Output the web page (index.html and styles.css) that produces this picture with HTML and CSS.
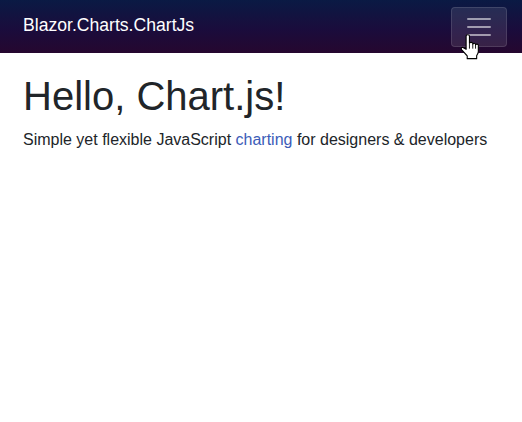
FILE: index.html
```html
<!DOCTYPE html>
<html lang="en">
<head>
<meta charset="utf-8">
<title>Blazor.Charts.ChartJs</title>
<link rel="stylesheet" href="styles.css">
</head>
<body>
<header class="top-row">
  <a class="brand" href="#">Blazor.Charts.ChartJs</a>
  <button class="toggler" aria-label="Toggle navigation">
    <svg class="toggler-icon" viewBox="0 0 30 30" width="30" height="30"><path d="M4 7h22M4 15h22M4 23h22" stroke="rgba(255,255,255,0.55)" stroke-width="2" stroke-linecap="round"/></svg>
  </button>
  <svg class="cursor" viewBox="0 0 18 23" width="20" height="26"><path d="M5.5 1.5C5.5 0.2 8.5 0.2 8.5 1.5L8.5 8.2C8.5 7 11.5 7 11.5 8.2L11.5 9C11.5 7.8 14 7.8 14 9L14 9.8C14 8.6 16.5 8.6 16.5 9.8L16.5 15.5C16.5 17.2 15.6 18.3 15 19.2L15 22L6.5 22L6.5 19.5C5.3 18.4 3.2 15.8 1.7 14.3C0.6 13.2 1.1 11.4 2.7 12L5.5 13.6Z" fill="#fff" stroke="#000" stroke-width="1" stroke-linejoin="round"/><path d="M8.5 8.5V13M11.5 9V13M14 9.8V13" stroke="#000" stroke-width="0.8"/></svg>
</header>
<main class="content">
  <h1 class="title">Hello, Chart.js!</h1>
  <p class="lead">Simple yet flexible JavaScript <a href="#" class="link">charting</a> for designers &amp; developers</p>
</main>
</body>
</html>
```
FILE: styles.css
```css
html, body {
  margin: 0;
  padding: 0;
  background: #fff;
  font-family: "Liberation Sans", Arial, sans-serif;
  color: #212529;
}

.top-row {
  position: relative;
  height: 53px;
  display: flex;
  align-items: center;
  justify-content: space-between;
  padding: 0 15px 0 23px;
  background: linear-gradient(180deg, #0a1a44 0%, #1a0c3c 55%, #26072f 100%);
}

.brand {
  color: #fff;
  font-size: 17.6px;
  text-decoration: none;
  line-height: 1;
  margin-top: -2px;
}

.toggler {
  width: 56px;
  height: 40px;
  padding: 4px 12px;
  display: flex;
  align-items: center;
  justify-content: center;
  background-color: rgba(255, 255, 255, 0.1);
  border: 1px solid rgba(255, 255, 255, 0.12);
  border-radius: 4px;
}

.toggler-icon {
  display: block;
}

.cursor {
  position: absolute;
  left: 460px;
  top: 34px;
}

.content {
  padding: 19px 23px;
}

.title {
  margin: 0 0 8px;
  font-size: 40px;
  font-weight: 400;
  line-height: 1.2;
}

.lead {
  margin: 0;
  font-size: 16px;
  line-height: 1.5;
}

.link {
  color: #3b5cb8;
  text-decoration: none;
}
```
